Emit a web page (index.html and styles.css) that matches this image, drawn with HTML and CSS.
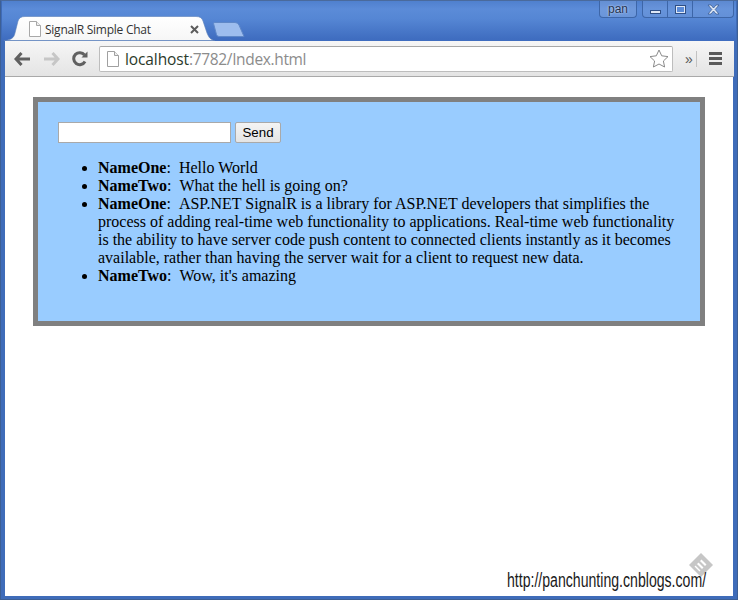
FILE: index.html
```html
<!DOCTYPE html>
<html lang="en">
<head>
<meta charset="utf-8">
<title>SignalR Simple Chat</title>
<link rel="stylesheet" href="styles.css">
</head>
<body>
<div class="window">
  <header class="titlebar">
    <div class="tab">
      <svg class="tab-shape" width="214" height="25" viewBox="0 0 214 25"><defs><linearGradient id="tabfill" x1="0" y1="0" x2="0" y2="1"><stop offset="0" stop-color="#ffffff"/><stop offset="1" stop-color="#f6f6f6"/></linearGradient></defs><path d="M2 24.500 C9 24 12 22 13 17 L16 5 C17 2 19 .500 23 .500 L194 .500 C198 .500 200 2 201 5 L205 17 C207 22 209 24 213 24.500 Z" fill="url(#tabfill)" stroke="#5a7fb8" stroke-width=".6"/></svg>
      <svg class="page-icon tab-page" width="13" height="16" viewBox="0 0 13 16"><path d="M1.500.500H8.500L12.500 4.500V15.500H1.500Z" fill="#fff" stroke="#a8a8a8"/><path d="M8.500.500V4.500H12.500" fill="#eee" stroke="#a8a8a8"/></svg>
      <span class="tab-title">SignalR Simple Chat</span>
      <svg class="tab-close" width="9" height="9" viewBox="0 0 9 9"><path d="M1 1L8 8M8 1L1 8" stroke="#5c5c5c" stroke-width="2"/></svg>
    </div>
    <svg class="newtab" width="32" height="19" viewBox="0 0 32 19"><path d="M.500 1.500Q.500 .500 2 .500H22Q25 .500 26 3L31 14.500H6Q4 14.500 3.500 12.500Z" fill="#9dbdee" stroke="#5f88c8"/></svg>
    <div class="user-badge">pan</div>
    <div class="controls">
      <div class="ctl ctl-min"><span class="min-glyph"></span></div>
      <div class="ctl ctl-max"><span class="max-glyph"></span></div>
      <div class="ctl ctl-close"><svg width="15" height="11" viewBox="0 0 15 11"><path d="M2 1H5L7.500 4L10 1H13L9.200 5.500L13 10H10L7.500 7L5 10H2L5.800 5.500Z" fill="#dfe8f6" stroke="#3a5d96" stroke-width=".8"/></svg></div>
    </div>
  </header>
  <nav class="toolbar">
    <svg class="nav-icon" width="17" height="14" viewBox="0 0 17 14"><path d="M7.500 1L2 7L7.500 13M2.500 7H16" fill="none" stroke="#606060" stroke-width="3"/></svg>
    <svg class="nav-icon" width="17" height="14" viewBox="0 0 17 14"><path d="M9.500 1L15 7L9.500 13M14.500 7H1" fill="none" stroke="#c6c6c6" stroke-width="3"/></svg>
    <svg class="nav-icon" width="16" height="16" viewBox="0 0 16 16"><path d="M13 10.500A6 6 0 1 1 12.500 4" fill="none" stroke="#606060" stroke-width="3"/><path d="M9.500 6.500H15.500V.500Z" fill="#606060"/></svg>
    <div class="omnibox">
      <svg class="page-icon" width="13" height="16" viewBox="0 0 13 16"><path d="M1.500.500H8.500L12.500 4.500V15.500H1.500Z" fill="#fff" stroke="#a0a0a0"/><path d="M8.500.500V4.500H12.500" fill="#eee" stroke="#a0a0a0"/></svg>
      <span class="url"><span class="host">localhost</span>:7782/Index.html</span>
      <svg class="star" width="20" height="19" viewBox="0 0 20 19"><path d="M10 1L12.700 6.800L19 7.600L14.400 12L15.600 18L10 15L4.400 18L5.600 12L1 7.600L7.300 6.800Z" fill="#fff" stroke="#8a8a8a"/></svg>
    </div>
    <span class="chevrons">»</span>
    <span class="divider"></span>
    <div class="menu"><span></span><span></span><span></span></div>
  </nav>
  <main class="viewport">
    <section class="chat">
      <div class="form">
        <input class="message" type="text">
        <button class="send" type="button">Send</button>
      </div>
      <ul class="discussion">
        <li><strong>NameOne</strong>:&nbsp;&nbsp;Hello World</li>
        <li><strong>NameTwo</strong>:&nbsp;&nbsp;What the hell is going on?</li>
        <li><strong>NameOne</strong>:&nbsp;&nbsp;ASP.NET SignalR is a library for ASP.NET developers that simplifies the process of adding real-time web functionality to applications. Real-time web functionality is the ability to have server code push content to connected clients instantly as it becomes available, rather than having the server wait for a client to request new data.</li>
        <li><strong>NameTwo</strong>:&nbsp;&nbsp;Wow, it's amazing</li>
      </ul>
    </section>
    <svg class="wm-logo" width="26" height="26" viewBox="0 0 26 26"><path d="M13 1L25 13L13 25L1 13Z" fill="#c6c6c6"/><path d="M13.500 7.500L18.500 12.500L17 14L12 9L10.500 10.500L15.500 15.500L14 17L9 12L7.500 13.500L12.500 18.500L11.500 19.500L6.500 14.500Z" fill="#fff"/></svg>
    <span class="wm-text">http://panchunting.cnblogs.com/</span>
  </main>
</div>
</body>
</html>
```
FILE: styles.css
```css
* { box-sizing: border-box; }
html, body { margin: 0; padding: 0; }
body { width: 738px; height: 600px; overflow: hidden; background: #fff; }

.window {
  width: 738px;
  height: 600px;
  display: flex;
  flex-direction: column;
  background: #3f6cb9;
  border: 1px solid #3d5f94;
  border-top-color: #4a6a9c;
  padding: 0 4px 3px 3px;
}

.titlebar {
  position: relative;
  height: 40px;
  flex: none;
  margin: 0 -3px 0 -2px;
  background: linear-gradient(#4f80ce 0, #5b8bd8 8px, #5586d4 18px, #3f6dc0 38px);
  font-family: "Liberation Sans", Arial, sans-serif;
}
.tab {
  position: absolute;
  left: 0;
  top: 15px;
  width: 214px;
  height: 25px;
}
.tab-shape { position: absolute; left: 0; top: 0; }
.tab-page { position: absolute; left: 26px; top: 5px; }
.tab-title {
  position: absolute;
  left: 43px;
  top: 6px;
  font-family: "Open Sans", "Noto Sans", sans-serif;
  font-size: 12px;
  line-height: 16px;
  letter-spacing: -0.25px;
  color: #333;
  white-space: nowrap;
}
.tab-close { position: absolute; left: 188px; top: 9px; }
.newtab { position: absolute; left: 211px; top: 21px; }

.user-badge {
  position: absolute;
  left: 597px;
  top: 0;
  width: 38px;
  height: 17px;
  border: 1px solid #3d66a8;
  border-top: 0;
  border-radius: 0 0 4px 4px;
  background: rgba(255, 255, 255, 0.12);
  color: #1f3250;
  font-size: 12px;
  line-height: 16px;
  text-align: center;
  text-shadow: 0 0 2px #e8f0fc;
}
.controls {
  position: absolute;
  left: 640px;
  top: 0;
  height: 17px;
  width: 92px;
  display: flex;
  border: 1px solid #3d66a8;
  border-top: 0;
  border-radius: 0 0 4px 4px;
  background: rgba(255, 255, 255, 0.08);
}
.ctl { display: flex; align-items: center; justify-content: center; height: 100%; }
.ctl-min { width: 25px; border-right: 1px solid #3d66a8; }
.ctl-max { width: 25px; border-right: 1px solid #3d66a8; }
.ctl-close { flex: 1; }
.min-glyph { width: 11px; height: 4px; margin-top: 6px; background: #dfe8f6; border: 1px solid #2f4f85; }
.max-glyph { width: 11px; height: 9px; background: #5b8bd8; border: 2px solid #dfe8f6; outline: 1px solid #2f4f85; outline-offset: -1px; }

.toolbar {
  height: 36px;
  flex: none;
  margin: 0 -1px 0 1px;
  display: flex;
  align-items: center;
  padding: 0 0 0 9px;
  background: linear-gradient(#f6f6f6, #e4e4e4);
  border-bottom: 1px solid #a9a9a9;
}
.nav-icon { margin-right: 12px; flex: none; }
.omnibox {
  width: 574px;
  height: 26px;
  margin-left: -1px;
  display: flex;
  align-items: center;
  padding: 0 3px 0 6px;
  background: #fff;
  border: 1px solid #bdbdbd;
  border-top-color: #a8a8a8;
  border-radius: 2px;
  font-family: "Open Sans", "Noto Sans", sans-serif;
}
.url {
  margin-left: 6px;
  font-size: 15.500px;
  letter-spacing: -0.35px;
  color: #8c8c8c;
  white-space: nowrap;
}
.host { color: #2b3a2b; letter-spacing: -0.1px; }
.star { margin-left: auto; }
.chevrons { margin-left: 12px; font-family: "Liberation Sans", sans-serif; font-size: 14px; color: #555; line-height: 14px; }
.divider { width: 1px; height: 16px; margin-left: 3px; background: #c2c2c2; }
.menu { margin-left: 12px; display: flex; flex-direction: column; gap: 2px; width: 13px; }
.menu span { height: 3px; background: #5a5a5a; }

.viewport {
  position: relative;
  flex: 1;
  margin-left: 1px;
  padding: 20px 28px 0;
  background: #fff;
  overflow: hidden;
}
.chat {
  width: 672px;
  height: 229px;
  padding: 20px;
  background: #99ccff;
  border: 5px solid #808080;
  font-family: "Liberation Serif", "Times New Roman", serif;
  font-size: 16px;
  line-height: 18px;
  color: #000;
}
.form { display: flex; align-items: stretch; gap: 4px; height: 21px; }
.message {
  width: 173px;
  height: 21px;
  margin: 0;
  background: #fff;
  border: 1px solid #a9a9a9;
  padding: 1px 2px;
}
.send {
  width: 46px;
  height: 21px;
  margin: 0;
  padding: 0;
  font-family: "Liberation Sans", Arial, sans-serif;
  font-size: 13.300px;
  color: #000;
  background: linear-gradient(#f4f4f4, #e4e4e4);
  border: 1px solid #a9a9a9;
  border-radius: 2px;
}
.discussion { margin: 16px 0 0; padding: 0 0 0 40px; }

.wm-logo { position: absolute; left: 683px; top: 475px; }
.wm-text {
  position: absolute;
  left: 502px;
  top: 491px;
  font-family: "Liberation Sans", Arial, sans-serif;
  font-size: 20px;
  line-height: 24px;
  color: #1a1a1a;
  white-space: nowrap;
  transform: scaleX(0.705);
  transform-origin: left center;
}
```
